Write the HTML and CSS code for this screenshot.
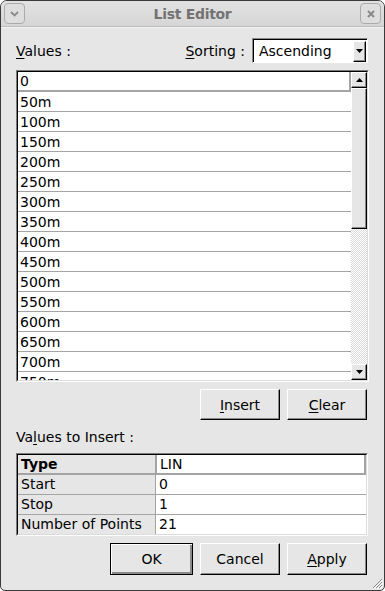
FILE: index.html
```html
<!DOCTYPE html>
<html>
<head>
<meta charset="utf-8">
<link rel="stylesheet" href="styles.css">
</head>
<body>
<div class="window">
  <div class="titlebar">
    <div class="tbtn">
      <svg width="9" height="6" viewBox="0 0 9 6"><path d="M1 1 L4.5 4.5 L8 1" fill="none" stroke="#8a8a8a" stroke-width="1.8"/></svg>
    </div>
    <div class="title">List Editor</div>
    <div class="tbtn">
      <svg width="8" height="8" viewBox="0 0 8 8"><path d="M1 1 L7 7 M7 1 L1 7" fill="none" stroke="#8a8a8a" stroke-width="2"/></svg>
    </div>
  </div>
  <div class="content">
    <div class="toprow">
      <span class="lbl"><u>V</u>alues :</span>
      <div class="sortgrp">
        <span class="lbl sortlbl"><u>S</u>orting :</span>
        <div class="select">
          <span class="seltext">Ascending</span>
          <div class="selbtn"><svg width="7" height="4" viewBox="0 0 7 4"><path d="M0 0 H7 L3.5 4 Z" fill="#000"/></svg></div>
        </div>
      </div>
    </div>
    <div class="list">
      <div class="listin">
        <div class="rows">
          <div class="row first">0</div>
          <div class="row">50m</div>
          <div class="row">100m</div>
          <div class="row">150m</div>
          <div class="row">200m</div>
          <div class="row">250m</div>
          <div class="row">300m</div>
          <div class="row">350m</div>
          <div class="row">400m</div>
          <div class="row">450m</div>
          <div class="row">500m</div>
          <div class="row">550m</div>
          <div class="row">600m</div>
          <div class="row">650m</div>
          <div class="row">700m</div>
          <div class="row">750m</div>
        </div>
        <div class="vscroll">
          <div class="sbtn"><svg width="7" height="4" viewBox="0 0 7 4"><path d="M0 4 H7 L3.5 0 Z" fill="#000"/></svg></div>
          <div class="thumb"></div>
          <div class="track"></div>
          <div class="sbtn"><svg width="7" height="4" viewBox="0 0 7 4"><path d="M0 0 H7 L3.5 4 Z" fill="#000"/></svg></div>
        </div>
      </div>
    </div>
    <div class="btnrow">
      <button class="btn"><u>I</u>nsert</button>
      <button class="btn"><u>C</u>lear</button>
    </div>
    <div class="seclabel">Va<u>l</u>ues to Insert :</div>
    <div class="table">
      <div class="tablein">
        <div class="cell key bold headrow">Type</div>
        <div class="cell val editing">LIN</div>
        <div class="cell key">Start</div>
        <div class="cell val">0</div>
        <div class="cell key">Stop</div>
        <div class="cell val">1</div>
        <div class="cell key last">Number of Points</div>
        <div class="cell val last">21</div>
      </div>
    </div>
    <div class="btnrow bottom">
      <button class="btn wide default">OK</button>
      <button class="btn">Cancel</button>
      <button class="btn"><u>A</u>pply</button>
    </div>
  </div>
  <svg class="grip" width="12" height="12" viewBox="0 0 12 12">
    <path d="M11 2 L2 11 M11 5 L5 11 M11 8 L8 11" stroke="#8a8a8a" stroke-width="1"/>
    <path d="M12 3 L3 12 M12 6 L6 12 M12 9 L9 12" stroke="#fff" stroke-width="1"/>
  </svg>
</div>
</body>
</html>
```

FILE: styles.css
```css
html, body {
  margin: 0;
  padding: 0;
  background: #ffffff;
}

.window {
  width: 385px;
  height: 591px;
  box-sizing: border-box;
  border: 1px solid #3a3a3a;
  border-radius: 7px 7px 5px 5px;
  background: #e6e6e6;
  overflow: hidden;
  position: relative;
  display: flex;
  flex-direction: column;
  font-family: "DejaVu Sans", sans-serif;
  font-size: 14px;
  color: #000;
}

.titlebar {
  height: 25px;
  flex: none;
  background: linear-gradient(#e2e2e2, #d6d6d6);
  border-bottom: 1px solid #bcbcbc;
  display: flex;
  align-items: center;
  padding: 0 3px;
}

.tbtn {
  width: 21px;
  height: 21px;
  box-sizing: border-box;
  border: 1px solid #ababab;
  border-radius: 4px;
  background: #dedede;
  display: flex;
  align-items: center;
  justify-content: center;
}

.title {
  flex: 1;
  text-align: center;
  font-weight: bold;
  color: #727272;
  font-size: 14px;
  letter-spacing: -0.3px;
}

.content {
  flex: 1;
  display: flex;
  flex-direction: column;
  padding: 0 15px;
  border-top: 1px solid #f2f2f2;
}

.toprow {
  margin-top: 10px;
  height: 25px;
  display: flex;
  align-items: center;
  justify-content: space-between;
  margin-right: 1px;
}

.lbl {
  font-size: 14px;
}

.lbl u, .btn u, .seclabel u {
  text-decoration: underline;
  text-underline-offset: 2px;
}

.sortgrp {
  display: flex;
  align-items: center;
}

.sortlbl {
  margin-right: 7px;
}

.select {
  width: 116px;
  height: 25px;
  box-sizing: border-box;
  border: 1px solid;
  border-color: #8a8a8a #ffffff #ffffff #8a8a8a;
  box-shadow: inset 1px 1px #000;
  background: #fff;
  display: flex;
  align-items: center;
  padding-left: 6px;
  padding-right: 1px;
}

.seltext {
  flex: 1;
  font-size: 14px;
}

.selbtn {
  width: 13px;
  height: 21px;
  box-sizing: border-box;
  margin-top: 1px;
  border: 1px solid;
  border-color: #fff #000 #000 #fff;
  box-shadow: inset -1px -1px #8a8a8a;
  background: #e6e6e6;
  display: flex;
  align-items: center;
  justify-content: center;
}

.list {
  margin-top: 7px;
  height: 312px;
  box-sizing: border-box;
  border: 1px solid;
  border-color: #7a7a7a #ffffff #ffffff #7a7a7a;
}

.listin {
  height: 100%;
  box-sizing: border-box;
  border: 1px solid;
  border-color: #000 #dcdcdc #dcdcdc #000;
  display: flex;
  background: #fff;
}

.rows {
  flex: 1;
  overflow: hidden;
}

.row {
  height: 20px;
  box-sizing: border-box;
  border-bottom: 1px solid #a4a4a4;
  padding-left: 2px;
  line-height: 20px;
  font-size: 14px;
}

.row.first {
  border-bottom: 2px solid #a4a4a4;
  border-right: 2px solid #a4a4a4;
  line-height: 19px;
}

.vscroll {
  width: 16px;
  display: flex;
  flex-direction: column;
  background: #e6e6e6;
}

.sbtn, .thumb {
  box-sizing: border-box;
  border: 1px solid;
  border-color: #fff #000 #000 #fff;
  box-shadow: inset -1px -1px #8a8a8a;
  background: #e6e6e6;
}

.sbtn {
  height: 16px;
  display: flex;
  align-items: center;
  justify-content: center;
}

.thumb {
  height: 141px;
}

.track {
  flex: 1;
  background: repeating-conic-gradient(#dadada 0 25%, #ffffff 0 50%) 0 0 / 2px 2px;
}

.btnrow {
  display: flex;
  justify-content: flex-end;
  gap: 7px;
  margin-top: 7px;
  margin-right: 2px;
}

.btn {
  width: 80px;
  height: 31px;
  box-sizing: border-box;
  border: 1px solid;
  border-color: #fff #000 #000 #fff;
  box-shadow: inset -1px -1px #8a8a8a;
  background: #e6e6e6;
  font-family: "DejaVu Sans", sans-serif;
  font-size: 14px;
  color: #000;
  padding: 0;
  margin: 0;
}

.btn.wide {
  width: 83px;
}

.btn.default {
  border-color: #000;
  box-shadow: inset 1px 1px #fff, inset -2px -2px #8a8a8a;
}

.seclabel {
  margin-top: 9px;
  height: 16px;
  line-height: 16px;
  font-size: 14px;
}

.table {
  margin-top: 8px;
  margin-right: 1px;
  box-sizing: border-box;
  border: 1px solid;
  border-color: #7a7a7a #ffffff #ffffff #7a7a7a;
}

.tablein {
  border: 1px solid;
  border-color: #000 #dcdcdc #dcdcdc #000;
  display: grid;
  grid-template-columns: 138px 1fr;
  background: #fff;
}

.cell {
  height: 20px;
  box-sizing: border-box;
  border-bottom: 1px solid #a4a4a4;
  line-height: 19px;
  padding-left: 3px;
  font-size: 14px;
}

.cell.key {
  background: #e6e6e6;
  border-right: 1px solid #a4a4a4;
}

.cell.val {
  background: #fff;
}

.cell.bold {
  font-weight: bold;
}

.cell.headrow {
  border-bottom: 2px solid #a4a4a4;
}

.cell.editing {
  border-bottom: 2px solid #a4a4a4;
  border-right: 2px solid #a4a4a4;
  border-left: 1px solid #a4a4a4;
}

.cell.last {
  border-bottom: none;
  height: 19px;
}

.btnrow.bottom {
  margin-top: 7px;
}

.btnrow.bottom .btn {
  height: 32px;
}

.grip {
  position: absolute;
  right: 1px;
  bottom: 1px;
}
```
